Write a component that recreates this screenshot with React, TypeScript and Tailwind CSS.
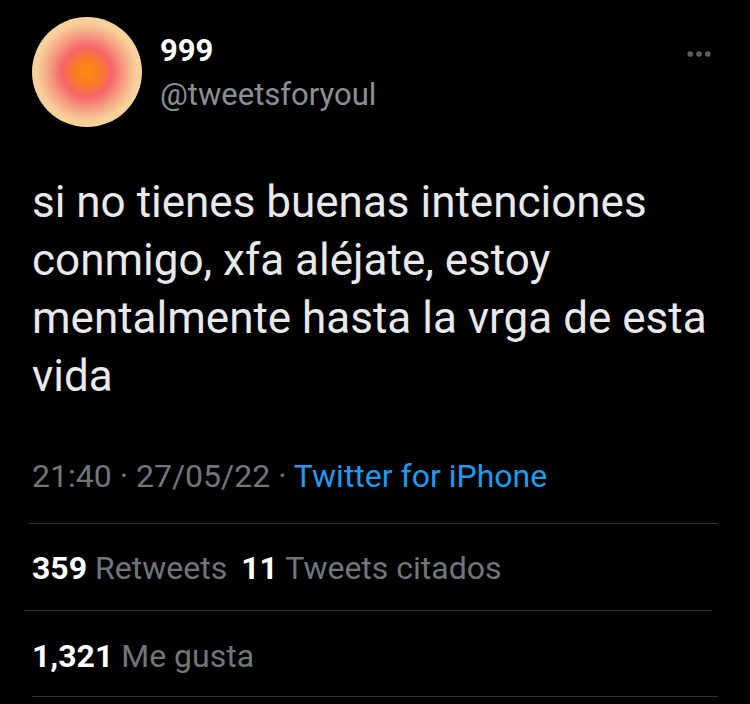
import { MoreHorizontal } from "lucide-react";

const font = { fontFamily: "Roboto, 'Liberation Sans', sans-serif" };

export default function App() {
  return (
    <div className="h-[704px] w-[750px] overflow-hidden bg-black text-white" style={font}>
      <div className="flex items-start pl-[32px] pr-[36px] pt-[17px]">
        <div
          className="h-[110px] w-[110px] shrink-0 rounded-full"
          style={{
            background:
              "radial-gradient(circle at 50% 50%, #fd8a0c 0%, #fb7d22 16%, #f5646a 32%, #f6a585 50%, #f8d09a 64%, #f6dba1 100%)",
          }}
        />
        <div className="ml-[18px] flex flex-col pt-[16px]">
          <span className="text-[31px] font-bold leading-[36px]">999</span>
          <span className="mt-[8px] text-[31px] leading-[36px] text-[#8b8f94]">@tweetsforyoul</span>
        </div>
        <div className="ml-auto pt-[22px] text-[#5b5f63]">
          <MoreHorizontal size={30} strokeWidth={2.5} />
        </div>
      </div>

      <div className="mt-[46px] pl-[32px] text-[44px] leading-[58px] text-[#e7e9ea]">
        <div className="whitespace-nowrap">si no tienes buenas intenciones</div>
        <div className="whitespace-nowrap">conmigo, xfa aléjate, estoy</div>
        <div className="whitespace-nowrap">mentalmente hasta la vrga de esta</div>
        <div className="whitespace-nowrap">vida</div>
      </div>

      <div className="mt-[52px] pl-[32px] text-[32px] leading-[38px] text-[#71767b]">
        21:40 · 27/05/22 · <span className="text-[#1d9bf0]">Twitter for iPhone</span>
      </div>

      <div className="ml-[28px] mr-[32px] mt-[28px] border-t border-[#2f3336]" />

      <div className="flex items-center gap-[14px] pl-[32px] pt-[25px] text-[32px] leading-[38px]">
        <span>
          <span className="font-bold text-white">359</span>{" "}
          <span className="text-[#71767b]">Retweets</span>
        </span>
        <span>
          <span className="font-bold text-white">11</span>{" "}
          <span className="text-[#71767b]">Tweets citados</span>
        </span>
      </div>

      <div className="ml-[24px] mr-[38px] mt-[23px] border-t border-[#2f3336]" />

      <div className="pl-[32px] pt-[26px] text-[32px] leading-[38px]">
        <span className="font-bold text-white">1,321</span>{" "}
        <span className="text-[#71767b]">Me gusta</span>
      </div>

      <div className="ml-[32px] mr-[32px] mt-[21px] border-t border-[#2f3336]" />
    </div>
  );
}
